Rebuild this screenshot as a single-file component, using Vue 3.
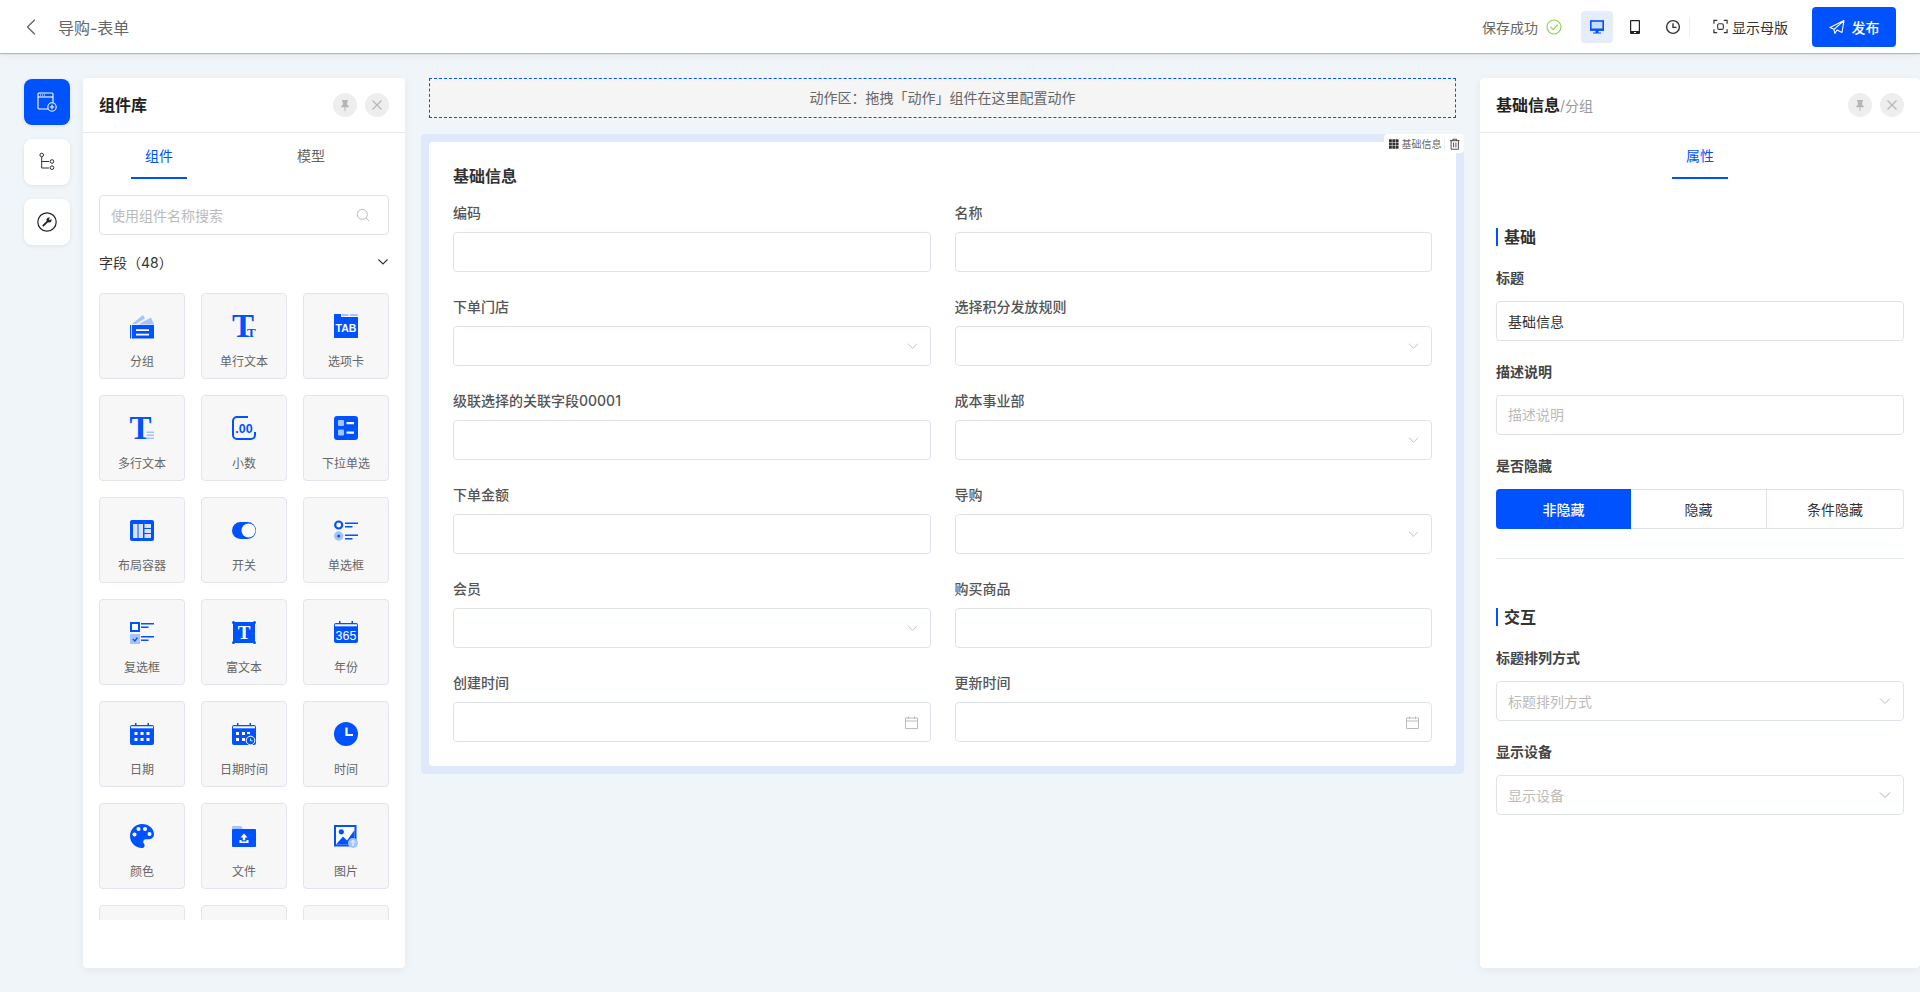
<template>
  <div class="page">
    <!-- Top bar -->
    <header class="topbar">
      <div class="tb-left">
        <svg class="tb-back" viewBox="0 0 10 16" fill="none">
          <path d="M8.5 1 1.5 8l7 7" stroke="#666" stroke-width="1.4" stroke-linecap="round" stroke-linejoin="round"/>
        </svg>
        <span class="tb-title">导购-表单</span>
      </div>
      <div class="tb-right">
        <span class="tb-saved">保存成功</span>
        <svg class="tb-check" viewBox="0 0 16 16" fill="none">
          <circle cx="8" cy="8" r="7" stroke="#8cd552" stroke-width="1.2"/>
          <path d="M4.8 8.2 7.2 10.6 11.4 6" stroke="#8cd552" stroke-width="1.2" stroke-linecap="round" stroke-linejoin="round"/>
        </svg>
        <button class="tb-device active">
          <svg viewBox="0 0 16 16" width="16" height="16">
            <rect x="1.800" y="2" width="12.400" height="8.800" fill="#cddcfb" stroke="#0052ff" stroke-width="1.600"/>
            <path fill="#0052ff" d="M1 9.500h14v2.300H1zM6.500 11.800h3v1.700h-3zM4 13.500h8v1H4z"/>
          </svg>
        </button>
        <button class="tb-device">
          <svg viewBox="0 0 12 16" width="12" height="16">
            <path fill="#222" d="M2 1h8a1 1 0 0 1 1 1v12a1 1 0 0 1-1 1H2a1 1 0 0 1-1-1V2a1 1 0 0 1 1-1zm.2 1.200v9.800h7.600V2.200z"/>
            <rect x="5" y="13" width="2" height="1" fill="#fff"/>
          </svg>
        </button>
        <button class="tb-device">
          <svg viewBox="0 0 16 16" width="16" height="16" fill="none">
            <circle cx="8" cy="8" r="6.400" stroke="#333" stroke-width="1.400"/>
            <path d="M8 4.200V8.400h3.600" stroke="#333" stroke-width="1.400"/>
          </svg>
        </button>
        <span class="tb-divider"></span>
        <svg class="tb-master-icon" viewBox="0 0 16 16" fill="none">
          <path d="M1 5V1.500h3.500M11.500 1.500H15V5M15 11v3.500h-3.500M4.500 14.500H1V11" stroke="#333" stroke-width="1.300"/>
          <rect x="5" y="5" width="6" height="6" rx="1.500" stroke="#333" stroke-width="1.200"/>
        </svg>
        <span class="tb-master">显示母版</span>
        <button class="tb-publish">
          <svg viewBox="0 0 16 16" width="16" height="16" fill="none">
            <path d="M15 1.500 1 8.500l4 1.800L15 1.500zM15 1.500 13 13.500 8 11 5.800 14.500 5 10.300" stroke="#fff" stroke-width="1.100" stroke-linejoin="round"/>
          </svg>
          <span>发布</span>
        </button>
      </div>
    </header>

    <div class="workspace">
      <!-- Icon rail -->
      <nav class="rail">
        <div class="rail-item active">
          <svg viewBox="0 0 20 20" width="20" height="20" fill="none">
            <path d="M11 17H2a1 1 0 0 1-1-1V2a1 1 0 0 1 1-1h13a1 1 0 0 1 1 1v8.500" stroke="#fff" stroke-width="1.100"/>
            <path d="M1 5h15" stroke="#fff" stroke-width="1.100"/>
            <path d="M3 3h1M5 3h1M7 3h1" stroke="#fff" stroke-width="1"/>
            <circle cx="15" cy="15" r="4.200" stroke="#fff" stroke-width="1.100"/>
            <path d="M15 12.800v4.400M12.800 15h4.400" stroke="#fff" stroke-width="1.100"/>
          </svg>
        </div>
        <div class="rail-item">
          <svg viewBox="0 0 20 20" width="20" height="20" fill="none">
            <circle cx="4.700" cy="3" r="1.800" stroke="#333" stroke-width="1"/>
            <circle cx="15" cy="9.500" r="1.800" stroke="#333" stroke-width="1"/>
            <circle cx="15" cy="15.700" r="1.800" stroke="#333" stroke-width="1"/>
            <path d="M4.700 5v11h7.500M4.700 9.500h7.500" stroke="#333" stroke-width="1"/>
          </svg>
        </div>
        <div class="rail-item">
          <svg viewBox="0 0 20 20" width="20" height="20" fill="none">
            <circle cx="10" cy="10" r="9.200" stroke="#222" stroke-width="1.200"/>
            <path d="M6.300 13.700 10.600 9.400" stroke="#222" stroke-width="1.800" stroke-linecap="round"/>
            <circle cx="12" cy="8" r="2.500" fill="#222"/>
            <path d="M12.300 7.700 14.600 5.400" stroke="#fff" stroke-width="1.600"/>
          </svg>
        </div>
      </nav>

      <!-- Component library -->
      <aside class="panel lib">
        <div class="panel-head">
          <span class="panel-title">组件库</span>
          <div class="panel-actions">
            <span class="round-btn">
              <svg viewBox="0 0 12 12" width="12" height="12"><path fill="#b5b5b5" d="M3 1h6v1.200l-.8.500v3l1.600 1.600v1H6.500V12h-1V8.300H2.200v-1l1.600-1.600v-3L3 2.200z"/></svg>
            </span>
            <span class="round-btn">
              <svg viewBox="0 0 12 12" width="12" height="12" fill="none"><path d="M1.500 1.500l9 9M10.500 1.500l-9 9" stroke="#b5b5b5" stroke-width="1.200"/></svg>
            </span>
          </div>
        </div>
        <div class="tabs">
          <div class="tab active"><span>组件</span></div>
          <div class="tab"><span>模型</span></div>
        </div>
        <div class="lib-body">
          <div class="lib-search">
            <input class="text-input" type="text" placeholder="使用组件名称搜索" />
            <svg viewBox="0 0 14 14" width="14" height="14" fill="none">
              <circle cx="6.300" cy="6.300" r="5" stroke="#bbb" stroke-width="1"/>
              <path d="M10 10l3 3" stroke="#bbb" stroke-width="1"/>
            </svg>
          </div>
          <div class="lib-group">
            <span>字段（48）</span>
            <svg viewBox="0 0 12 8" width="12" height="8" fill="none">
              <path d="M1.500 1.500 6 6l4.500-4.500" stroke="#333" stroke-width="1.100"/>
            </svg>
          </div>
          <div class="lib-grid">
            <div v-for="(w, i) in widgets" :key="i" class="widget">
              <svg v-if="w.icon" class="widget-icon" viewBox="0 0 24 24" v-html="w.icon"></svg>
              <span>{{ w.name }}</span>
            </div>
          </div>
        </div>
      </aside>

      <!-- Canvas -->
      <main class="canvas">
        <div class="action-zone">动作区：拖拽「动作」组件在这里配置动作</div>
        <section class="frame">
          <div class="frame-tag">
            <svg viewBox="0 0 10 10" width="10" height="10">
              <path fill="#333" d="M0 0h3v3H0zM3.500 0h3v3h-3zM7 0h3v3H7zM0 3.500h3v3H0zM3.500 3.500h3v3h-3zM7 3.500h3v3H7zM0 7h3v3H0zM3.500 7h3v3h-3zM7 7h3v3H7z"/>
            </svg>
            <span>基础信息</span>
            <i></i>
            <svg viewBox="0 0 12 12" width="12" height="12" fill="none">
              <path d="M1 2.500h10M4 2.500V1h4v1.500M2.200 2.500v9h7.600v-9M4.800 4.500v5M7.200 4.500v5" stroke="#333" stroke-width=".9"/>
            </svg>
          </div>
          <div class="form-card">
            <h2 class="form-title">基础信息</h2>
            <div class="form-grid">
              <div v-for="f in fields" :key="f.label" class="form-field">
                <label>{{ f.label }}</label>
                <div class="field-box">
                  <svg v-if="f.type === 'select'" viewBox="0 0 12 8" width="11" height="8" fill="none">
                    <path d="M1 1.500 6 6.500l5-5" stroke="#bbb" stroke-width="1"/>
                  </svg>
                  <svg v-if="f.type === 'date'" viewBox="0 0 13 13" width="13" height="13" fill="none">
                    <path d="M.5 2h12v10.500H.5zM.5 5h12M3.500.500V3M9.500.500V3" stroke="#bbb" stroke-width="1"/>
                  </svg>
                </div>
              </div>
            </div>
          </div>
        </section>
      </main>

      <!-- Properties -->
      <aside class="panel props">
        <div class="panel-head">
          <span class="panel-title">基础信息<em>/分组</em></span>
          <div class="panel-actions">
            <span class="round-btn">
              <svg viewBox="0 0 12 12" width="12" height="12"><path fill="#b5b5b5" d="M3 1h6v1.200l-.8.500v3l1.600 1.600v1H6.500V12h-1V8.300H2.200v-1l1.600-1.600v-3L3 2.200z"/></svg>
            </span>
            <span class="round-btn">
              <svg viewBox="0 0 12 12" width="12" height="12" fill="none"><path d="M1.500 1.500l9 9M10.500 1.500l-9 9" stroke="#b5b5b5" stroke-width="1.200"/></svg>
            </span>
          </div>
        </div>
        <div class="tabs center">
          <div class="tab active"><span>属性</span></div>
        </div>
        <div class="props-body">
          <h3 class="sec-title first">基础</h3>
          <div class="prop-field">
            <label>标题</label>
            <input class="text-input boxed" type="text" value="基础信息" />
          </div>
          <div class="prop-field">
            <label>描述说明</label>
            <input class="text-input boxed" type="text" placeholder="描述说明" />
          </div>
          <div class="prop-field">
            <label>是否隐藏</label>
            <div class="segments">
              <button v-for="(s, i) in hideOptions" :key="s" class="segment" :class="{ active: i === 0 }">{{ s }}</button>
            </div>
          </div>
          <div class="sec-divider"></div>
          <h3 class="sec-title">交互</h3>
          <div class="prop-field">
            <label>标题排列方式</label>
            <div class="prop-select">
              <span>标题排列方式</span>
              <svg viewBox="0 0 12 8" width="12" height="8" fill="none"><path d="M1 1.500 6 6.500l5-5" stroke="#bbb" stroke-width="1"/></svg>
            </div>
          </div>
          <div class="prop-field">
            <label>显示设备</label>
            <div class="prop-select">
              <span>显示设备</span>
              <svg viewBox="0 0 12 8" width="12" height="8" fill="none"><path d="M1 1.500 6 6.500l5-5" stroke="#aaa" stroke-width="1"/></svg>
            </div>
          </div>
        </div>
      </aside>
    </div>
  </div>
</template>

<script setup>
const B = '#0052ff'
const L = '#a3c4ff'

// shared pieces of the calendar icons
const calendar = `<path fill="${B}" d="M5 1h1.500v2h11V1H19v2h3a2 2 0 0 1 2 2v16a2 2 0 0 1-2 2H2a2 2 0 0 1-2-2V5a2 2 0 0 1 2-2h3z"/><rect x="1" y="4.300" width="22" height="2" fill="#fff"/>`

const widgets = [
  { name: '分组', icon: `<path fill="${L}" d="M2 10 13 1l2 3.500L6 10z"/><path fill="${L}" d="M8 10.500 21 3.500 24 10.500z"/><rect y="11" width="1.200" height="13.500" fill="${B}"/><rect x="2" y="11" width="22" height="13.500" fill="${B}"/><path fill="#fff" d="M6 15.300h13V17H6zM6 19.700h13v1.800H6z"/>` },
  { name: '单行文本', icon: `<text x="0" y="22.500" font-family="Liberation Serif" font-weight="700" font-size="33" fill="${B}">T<tspan font-size="13" dx="-7">T</tspan></text>` },
  { name: '选项卡', icon: `<path fill="${B}" d="M0 0h7v3h17v21H0z"/><path fill="${L}" d="M8 0h6.500v2H8zM16 0h7.500v2H16z"/><text x="12" y="18" text-anchor="middle" font-family="Liberation Sans" font-weight="700" font-size="10.500" fill="#fff">TAB</text>` },
  { name: '多行文本', icon: `<text x="-.5" y="22.500" font-family="Liberation Serif" font-weight="700" font-size="33" fill="${B}">T</text><path fill="${L}" d="M16.500 15.500H24v1.500h-7.500zM16.500 18.500H24V20h-7.500zM16.500 21.500H24V23h-7.500z"/>` },
  { name: '小数', icon: `<path fill="none" stroke="${B}" stroke-width="2" d="M16 1H5a4 4 0 0 0-4 4v14a4 4 0 0 0 4 4h14a4 4 0 0 0 4-4v-3"/><text x="12" y="17" text-anchor="middle" font-family="Liberation Sans" font-weight="700" font-size="12.500" fill="${B}">.00</text>` },
  { name: '下拉单选', icon: `<rect width="24" height="24" rx="3" fill="${B}"/><rect x="4" y="4" width="6" height="6" rx="1" fill="${L}"/><rect x="4" y="13.500" width="6" height="6" rx="1" fill="${L}"/><path fill="#fff" d="M12.500 6h7.500v2.200h-7.500zM12.500 15.500h7.500v2.200h-7.500z"/>` },
  { name: '布局容器', icon: `<rect y="2" width="24" height="21" rx="2" fill="${B}"/><path fill="#d5e3ff" d="M3 6h4.500v14H3zM8.500 6H13v14H8.500zM14.500 6H21v4h-6.500zM14.500 11H21v4h-6.500zM14.500 16H21v4h-6.500z"/>` },
  { name: '开关', icon: `<rect y="4" width="24" height="17" rx="8.500" fill="${B}"/><circle cx="16.500" cy="12.500" r="7" fill="#fff"/>` },
  { name: '单选框', icon: `<circle cx="4.700" cy="7" r="3.500" fill="#fff" stroke="${B}" stroke-width="2.200"/><circle cx="4.700" cy="18" r="4.700" fill="${L}"/><circle cx="4.700" cy="18" r="1.500" fill="${B}"/><path fill="${B}" d="M11 4.500h13v1.600H11zM11 8h7.500v1.600H11zM11 16.500h13v1.600H11zM11 20h7.500v1.600H11z"/>` },
  { name: '复选框', icon: `<rect x="1" y="3" width="8" height="8" fill="#fff" stroke="${B}" stroke-width="2"/><rect y="14" width="10" height="10" fill="${L}"/><path d="M2.800 19 4.800 21 7.500 17.500" fill="none" stroke="${B}" stroke-width="1.300"/><path fill="${B}" d="M11 3h13v1.600H11zM11 6.500h7.500v1.600H11zM11 16h13v1.600H11zM11 19.500h7.500v1.600H11z"/>` },
  { name: '富文本', icon: `<rect x="1" y="2" width="22" height="21" fill="${B}"/><circle cx="1.500" cy="2.500" r="1.500" fill="${B}"/><circle cx="22.500" cy="2.500" r="1.500" fill="${B}"/><circle cx="1.500" cy="22.500" r="1.500" fill="${B}"/><circle cx="22.500" cy="22.500" r="1.500" fill="${B}"/><text x="12" y="18.500" text-anchor="middle" font-family="Liberation Serif" font-weight="700" font-size="19" fill="#fff">T</text>` },
  { name: '年份', icon: calendar + `<text x="12" y="19.800" text-anchor="middle" font-family="Liberation Sans" font-size="12.500" fill="#fff">365</text>` },
  { name: '日期', icon: calendar + `<path fill="#fff" d="M4.500 10h3v3h-3zM10.500 10h3v3h-3zM16.500 10h3v3h-3zM4.500 16h3v3h-3zM10.500 16h3v3h-3zM16.500 16h3v3h-3z"/>` },
  { name: '日期时间', icon: calendar + `<path fill="#fff" d="M4 10h3v3H4zM10 10h3v3h-3zM4 16h3v3H4zM10 16h3v3h-3zM15 10h3v2h-3z"/><circle cx="18.500" cy="18.500" r="4.300" fill="${B}" stroke="#fff" stroke-width="1"/><path d="M18.500 16.500v2.300h2" stroke="#fff" fill="none" stroke-width=".9"/>` },
  { name: '时间', icon: `<circle cx="12" cy="12" r="12" fill="${B}"/><path d="M12.500 5.500V13H19" fill="none" stroke="#fff" stroke-width="2.200"/>` },
  { name: '颜色', icon: `<path fill="${B}" d="M12 0C5.400 0 0 5.400 0 12s5.400 12 12 12c1.600 0 2.600-1.200 2.600-2.600 0-.7-.3-1.300-.7-1.800-.4-.5-.7-1-.7-1.700 0-1.500 1.200-2.600 2.600-2.600H19c2.800 0 5-2.200 5-5C24 4.600 18.600 0 12 0z"/><circle cx="4.500" cy="10.500" r="2" fill="#fff"/><circle cx="8.500" cy="5" r="2" fill="#fff"/><circle cx="15" cy="5" r="2" fill="#fff"/><circle cx="19.500" cy="10" r="2" fill="#fff"/>` },
  { name: '文件', icon: `<path fill="${L}" d="M1 2h8l2 3H0V3a1 1 0 0 1 1-1z"/><rect y="5" width="24" height="18" rx="1" fill="${B}"/><path fill="#fff" d="M12 9.500l3.500 4h-2.300v2.800h-2.400v-2.800H8.500zM7.500 16h2v1.500h5V16h2v3h-9z"/>` },
  { name: '图片', icon: `<rect y="1" width="22.500" height="21.500" fill="${B}"/><rect x="2" y="3" width="18.500" height="17.500" fill="#fff"/><circle cx="7.300" cy="7.800" r="2.600" fill="${B}"/><path fill="${B}" d="M2 20.500 9 12.500l4 4L20.500 6v14.500z"/><circle cx="19" cy="19" r="5" fill="${L}"/><path d="M19 22v-5.500M16.800 18.500 19 16.300l2.200 2.200" fill="none" stroke="#fff" stroke-width="1"/>` },
  { name: '', icon: '' },
  { name: '', icon: '' },
  { name: '', icon: '' },
]

const fields = [
  { label: '编码', type: 'input' },
  { label: '名称', type: 'input' },
  { label: '下单门店', type: 'select' },
  { label: '选择积分发放规则', type: 'select' },
  { label: '级联选择的关联字段00001', type: 'input' },
  { label: '成本事业部', type: 'select' },
  { label: '下单金额', type: 'input' },
  { label: '导购', type: 'select' },
  { label: '会员', type: 'select' },
  { label: '购买商品', type: 'input' },
  { label: '创建时间', type: 'date' },
  { label: '更新时间', type: 'date' },
]

const hideOptions = ['非隐藏', '隐藏', '条件隐藏']
</script>

<style scoped>
* {
  box-sizing: border-box;
}

.page {
  height: 992px;
  overflow: hidden;
  display: flex;
  flex-direction: column;
  background: #f0f5f9;
  font-family: Inter, 'Noto Sans CJK SC', sans-serif;
  font-size: 14px;
  color: #333;
}

/* ── Top bar ── */
.topbar {
  position: relative;
  z-index: 2;
  flex: none;
  height: 53px;
  padding: 0 24px 0 26px;
  display: flex;
  align-items: center;
  justify-content: space-between;
  background: #fff;
  box-shadow: 0 1px 1px rgba(0, 0, 0, 0.22), 0 2px 8px rgba(0, 0, 0, 0.06);
}

.tb-left,
.tb-right {
  display: flex;
  align-items: center;
}

.tb-back {
  width: 10px;
  height: 16px;
}

.tb-title {
  margin-left: 22px;
  font-size: 16px;
  color: #666;
}

.tb-saved {
  color: #666;
}

.tb-check {
  width: 16px;
  height: 16px;
  margin-left: 8px;
}

.tb-device {
  width: 32px;
  height: 32px;
  margin-left: 6px;
  padding: 0;
  border: none;
  border-radius: 4px;
  background: transparent;
  display: flex;
  align-items: center;
  justify-content: center;
}

.tb-device.active {
  margin-left: 19px;
  background: #e5ecfb;
}

.tb-divider {
  width: 1px;
  height: 20px;
  background: #eee;
}

.tb-master-icon {
  width: 15px;
  height: 15px;
  margin-left: 23px;
}

.tb-master {
  margin-left: 4px;
  color: #333;
}

.tb-publish {
  width: 84px;
  height: 40px;
  margin-left: 24px;
  border: none;
  border-radius: 4px;
  background: #0052ff;
  color: #fff;
  font: inherit;
  font-weight: 500;
  display: flex;
  align-items: center;
  justify-content: center;
  gap: 7px;
}

/* ── Workspace ── */
.workspace {
  flex: 1;
  min-height: 0;
  padding: 25px 0 24px 24px;
  display: flex;
  align-items: stretch;
}

.rail {
  flex: none;
  width: 46px;
  margin-right: 13px;
  padding-top: 1px;
  display: flex;
  flex-direction: column;
  gap: 14px;
}

.rail-item {
  width: 46px;
  height: 46px;
  border-radius: 8px;
  background: #fff;
  box-shadow: 0 1px 4px rgba(0, 0, 0, 0.08);
  display: flex;
  align-items: center;
  justify-content: center;
}

.rail-item.active {
  background: #0052ff;
}

/* ── Side panels ── */
.panel {
  flex: none;
  display: flex;
  flex-direction: column;
  border-radius: 4px;
  background: #fff;
  box-shadow: 0 2px 8px rgba(0, 0, 0, 0.06);
}

.lib {
  width: 322px;
}

.props {
  width: 440px;
}

.panel-head {
  flex: none;
  height: 55px;
  padding: 0 16px 1px;
  display: flex;
  align-items: center;
  justify-content: space-between;
  border-bottom: 1px solid #e4e8f1;
}

.panel-title {
  margin-bottom: 2px;
  font-size: 16px;
  font-weight: 600;
  color: #222;
}

.panel-title em {
  font-style: normal;
  font-size: 14px;
  font-weight: 400;
  color: #999;
}

.panel-actions {
  display: flex;
  gap: 8px;
}

.round-btn {
  width: 24px;
  height: 24px;
  border-radius: 50%;
  background: #eee;
  display: flex;
  align-items: center;
  justify-content: center;
}

.tabs {
  flex: none;
  display: flex;
}

.tabs.center {
  justify-content: center;
}

.tab {
  width: 152px;
  height: 46px;
  display: flex;
  justify-content: center;
  color: #666;
}

.tab span {
  width: 56px;
  height: 46px;
  border-bottom: 2px solid transparent;
  display: flex;
  align-items: center;
  justify-content: center;
}

.tab.active {
  color: #0052ff;
}

.tab.active span {
  border-bottom-color: #0052ff;
}

.text-input {
  width: 100%;
  height: 100%;
  padding: 0 11px;
  border: none;
  outline: none;
  background: transparent;
  font: inherit;
  color: #333;
}

.text-input::placeholder {
  color: #bbb;
}

.text-input.boxed {
  height: 40px;
  padding-bottom: 1px;
  border: 1px solid #dde2ec;
  border-radius: 4px;
}

/* ── Component library ── */
.lib-body {
  flex: 1;
  min-height: 0;
  padding: 16px 16px 48px;
  display: flex;
  flex-direction: column;
}

.lib-search {
  flex: none;
  height: 40px;
  padding-right: 18px;
  border: 1px solid #dde2ec;
  border-radius: 4px;
  display: flex;
  align-items: center;
}

.lib-search svg {
  flex: none;
}

.lib-group {
  flex: none;
  height: 22px;
  margin: 16px 0 20px;
  display: flex;
  align-items: center;
  justify-content: space-between;
}

.lib-grid {
  flex: 1;
  min-height: 0;
  overflow: hidden;
  display: grid;
  grid-template-columns: repeat(3, 86px);
  grid-auto-rows: 86px;
  gap: 16px;
  align-content: start;
}

.widget {
  padding-top: 20px;
  border: 1px solid #e2e5ee;
  border-radius: 4px;
  background: #f7f7f8;
  display: flex;
  flex-direction: column;
  align-items: center;
  font-size: 12px;
  line-height: 18px;
  color: #666;
}

.widget-icon {
  width: 24px;
  height: 24px;
  margin-bottom: 15px;
  overflow: visible;
}

/* ── Canvas ── */
.canvas {
  flex: 1;
  min-width: 0;
  padding: 0 16px;
}

.action-zone {
  height: 40px;
  margin: 0 8px 16px;
  padding-bottom: 2px;
  border: 1px dashed #0052ff;
  background: #f5f5f5;
  display: flex;
  align-items: center;
  justify-content: center;
  color: #666;
}

.frame {
  position: relative;
  padding: 8px;
  border-radius: 4px;
  background: #dfe9fb;
}

.frame-tag {
  position: absolute;
  top: 0;
  right: 0;
  height: 19px;
  width: 80px;
  padding: 0 4px 0 5px;
  border-radius: 4px;
  background: #fff;
  display: flex;
  align-items: center;
  font-size: 10px;
  color: #666;
}

.frame-tag span {
  margin-left: 3px;
  white-space: nowrap;
}

.frame-tag i {
  width: 1px;
  height: 12px;
  margin: 0 4px 0 2px;
  background: #eee;
}

.form-card {
  padding: 22px 24px 24px;
  border-radius: 4px;
  background: #fff;
}

.form-title {
  margin: 0 0 14px;
  font-size: 16px;
  line-height: 24px;
  font-weight: 600;
  color: #333;
}

.form-grid {
  display: grid;
  grid-template-columns: 1fr 1fr;
  gap: 24px;
}

.form-field label {
  display: block;
  margin-bottom: 8px;
  line-height: 22px;
  font-weight: 500;
  color: #555;
}

.field-box {
  height: 40px;
  padding: 0 12px;
  border: 1px solid #dde2ec;
  border-radius: 4px;
  background: #fff;
  display: flex;
  align-items: center;
  justify-content: flex-end;
}

/* ── Properties panel ── */
.props-body {
  padding: 0 16px;
}

.sec-title {
  margin: 0 0 21px;
  height: 18px;
  padding-left: 6px;
  border-left: 2px solid #0052ff;
  font-size: 16px;
  line-height: 18px;
  font-weight: 600;
  color: #333;
}

.sec-title.first {
  margin-top: 49px;
}

.prop-field {
  margin-bottom: 20px;
}

.prop-field label {
  display: block;
  margin-bottom: 12px;
  line-height: 22px;
  font-weight: 600;
  color: #444;
}

.segments {
  height: 40px;
  display: grid;
  grid-template-columns: 135px 136px 137px;
}

.segment {
  padding: 0;
  border: 1px solid #dde2ec;
  border-left: none;
  background: #fff;
  font: inherit;
  color: #333;
}

.segment:last-child {
  border-radius: 0 4px 4px 0;
}

.segment.active {
  border: none;
  border-radius: 4px 0 0 4px;
  background: #0052ff;
  color: #fff;
  font-weight: 500;
}

.sec-divider {
  height: 1px;
  margin: 29px 0 49px;
  background: #e4e8f1;
}

.prop-select {
  height: 40px;
  padding: 0 12px 1px 11px;
  border: 1px solid #dde2ec;
  border-radius: 4px;
  display: flex;
  align-items: center;
  justify-content: space-between;
  color: #bbb;
}
</style>
